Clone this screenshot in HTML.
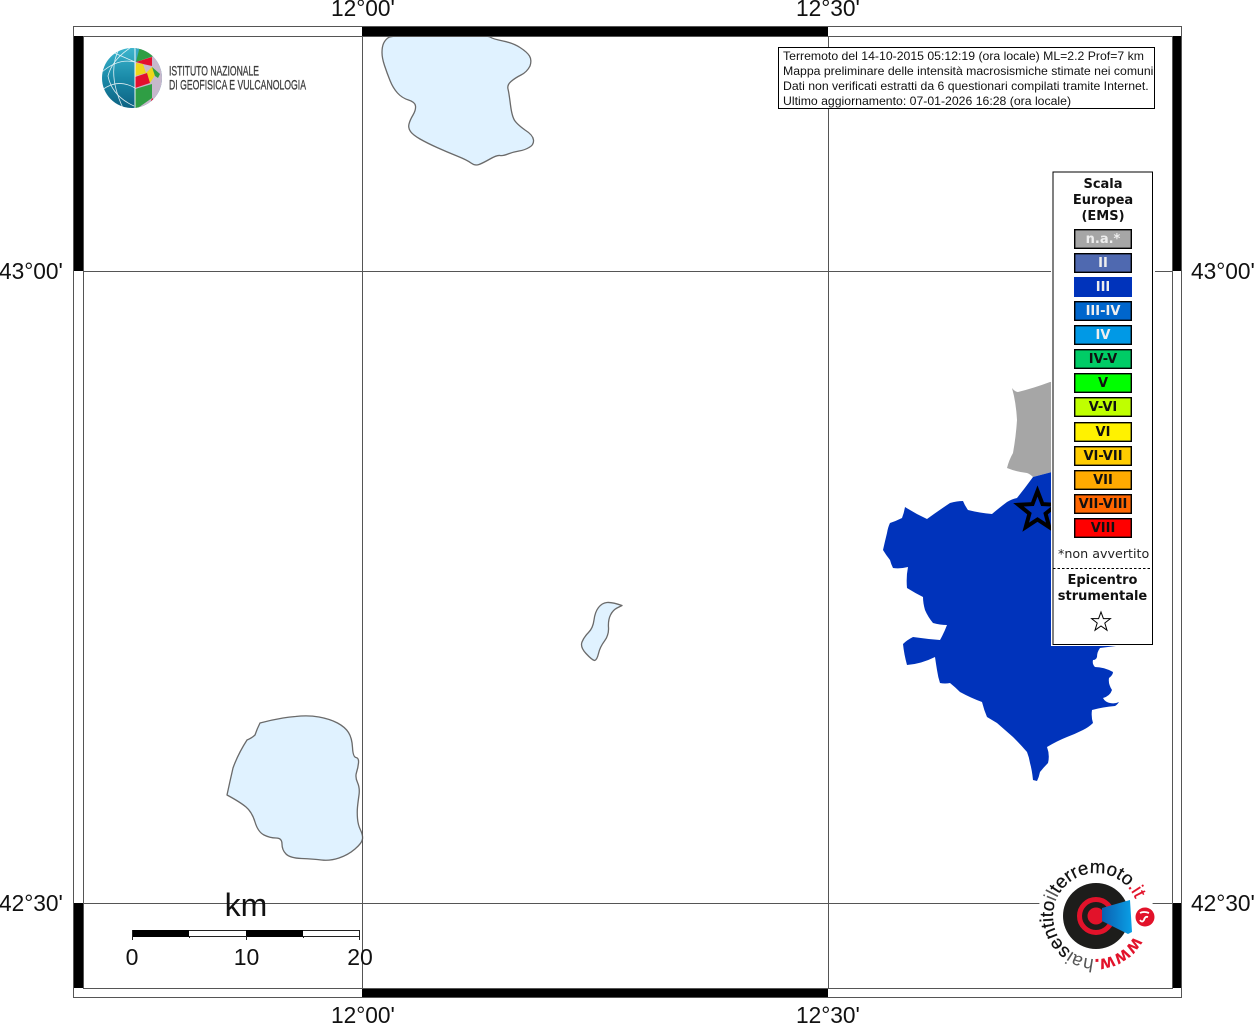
<!DOCTYPE html>
<html lang="it">
<head>
<meta charset="utf-8">
<title>Mappa intensità</title>
<style>
html,body{margin:0;padding:0;background:#fff;width:1255px;height:1024px;overflow:hidden}
svg{display:block}
.l{font-family:"Liberation Sans",sans-serif;font-size:22.7px;fill:#111}
.i{font-family:"Liberation Sans",sans-serif;font-size:12.25px;fill:#111}
.d{font-family:"DejaVu Sans",sans-serif;font-size:13px;font-weight:bold;fill:#111;text-anchor:middle}
.r{font-family:"DejaVu Sans",sans-serif;font-size:13px;font-weight:bold;text-anchor:middle}
</style>
</head>
<body>
<svg width="1255" height="1024" viewBox="0 0 1255 1024" xmlns="http://www.w3.org/2000/svg">
<rect width="1255" height="1024" fill="#fff"/>

<!-- lakes -->
<g fill="#e0f2ff" stroke="#6a6a6a" stroke-width="1.3" stroke-linejoin="round">
<path d="M382,52.5 Q382,47 383.5,43.5 Q385,40 388.5,37.5 Q392,35 439.5,35 Q487,35 490,37 Q493,39 503,41 Q513,43 520,47.5 Q527,52 529.5,56 Q532,60 530,66 Q527,72 521,75 Q515,78 511,81.5 Q507,85 508,89 Q509,93 510.5,105 Q512,117 515,121 Q518,125 525,130 Q533,135 533.5,140 Q534,145 529,147.5 Q525,150 519,151 Q513,152 508,154 Q503,156 500,155.5 Q497,155 490,159 Q483,163 479,164.5 Q475,166 471,163 Q467,160 457,156 Q447,152 437,147.5 Q427,143 420,139 Q413,135 410.5,131.5 Q408,128 409,124 Q410,120 413,115 Q416,110 415.5,106 Q415,102 408.5,100 Q402,98 397.5,93 Q393,88 390,80.5 Q387,73 384.5,65.5 Q382,58 382,52.5 Z"/>
<path d="M295.5,716.5 Q308,715 319,717 Q330,719 337.5,723 Q345,727 348.5,732.5 Q352,738 352.5,747.5 Q353,757 356,757.5 Q359,758 358.5,763 Q358,768 356.5,772.5 Q355,777 357.5,782.5 Q360,788 359,795 Q358,802 357.5,807 Q357,812 357.5,818.5 Q358,825 360.5,830 Q363,835 362.5,839 Q362,843 355,849 Q348,855 339,858 Q330,861 321.5,860 Q313,859 301.5,858.5 Q290,858 286,854 Q282,850 282,844 Q282,838 276,838 Q270,838 264,835 Q258,832 255,822 Q252,812 246,807 Q240,802 227,795 Q230,781 233,768 Q238,754 247,740 Q252,738 255,735 Q257,729 260,723 Q271,720 283,718 Q289,717 295.5,716.5 Z"/>
<path d="M598.5,607.5 Q602,603 607,602.5 Q612,602 622,605.5 L617,608 Q613,610 610.5,615 Q608,620 608.5,627.5 Q609,635 604.5,641 Q600,647 598.5,653.5 Q597,660 594.5,660.5 Q592,660 586,653.5 Q580,647 582,642 Q584,637 588.5,632.5 Q593,628 594,620 Q595,612 598.5,607.5 Z"/>
</g>

<!-- grey municipality -->
<path fill="#a6a6a6" d="M1012,388 Q1015,392 1018,392 Q1034,388 1050,382 L1075,380 L1075,474 L1052,472 L1033,477 Q1030,474 1027,473 Q1017,472 1007,468 Q1009,460 1013,453 Q1016,436 1017,420 Q1016,402 1012,388 Z"/>
<!-- blue municipality -->
<path fill="#0033bb" d="M1033,477 L1052,472 L1100,500 L1120,600 L1116,646 L1100,648 Q1097,652 1097,657 Q1096,660 1093,660 Q1092,664 1095,667 Q1104,667 1113,672 Q1113,675 1109,678 Q1108,684 1112,690 Q1110,696 1103,698 Q1105,702 1110,703 Q1115,704 1119,702 Q1117,705 1115,706 Q1103,707 1092,710 Q1091,717 1093,723 Q1089,727 1083,730 Q1075,734 1067,737 Q1057,741 1047,747 Q1050,755 1048,763 Q1044,767 1040,772 Q1039,777 1037,781 L1033,780 Q1032,770 1030,763 Q1029,757 1027,752 Q1020,744 1013,737 Q1005,730 997,723 Q992,720 987,717 Q984,710 982,702 Q971,698 960,692 Q955,687 950,683 Q945,684 940,683 Q938,677 937,670 Q936,664 935,657 Q921,664 907,665 Q904,654 903,644 Q907,640 913,637 Q927,639 940,640 Q944,633 947,625 Q940,625 933,623 Q928,617 925,610 Q923,603 923,597 Q915,593 907,588 Q906,577 908,567 Q900,569 893,568 Q891,564 890,560 Q886,555 883,550 Q885,541 887,533 Q888,527 890,523 Q896,521 902,518 Q904,513 905,507 Q916,514 927,519 Q938,511 950,503 Q957,501 963,501 Q965,506 968,510 Q980,513 992,514 Q999,508 1007,502 Q1012,499 1017,498 Q1025,488 1033,477 Z"/>
<!-- epicentre star -->
<polygon fill="#0033bb" stroke="#000" stroke-width="4" stroke-linejoin="miter" points="1037.5,491 1042.5,504.1 1056.5,504.8 1045.6,513.6 1049.3,527.2 1037.5,519.5 1025.7,527.2 1029.4,513.6 1018.5,504.8 1032.5,504.1"/>

<!-- graticule -->
<g stroke="#555" stroke-width="1" fill="none">
<line x1="362.5" y1="36" x2="362.5" y2="988"/>
<line x1="828.5" y1="36" x2="828.5" y2="988"/>
<line x1="83" y1="271.5" x2="1172" y2="271.5"/>
<line x1="83" y1="903.5" x2="1172" y2="903.5"/>
</g>

<!-- frame -->
<g fill="#000">
<rect x="362" y="26" width="466" height="10"/>
<rect x="362" y="988" width="466" height="9"/>
<rect x="73" y="36" width="10" height="235"/>
<rect x="73" y="903" width="10" height="85"/>
<rect x="1172" y="36" width="9" height="235"/>
<rect x="1172" y="903" width="9" height="85"/>
</g>
<g fill="none" stroke="#555" stroke-width="1">
<rect x="73.5" y="26.5" width="1108" height="971"/>
<rect x="83.5" y="36.5" width="1089" height="952"/>
</g>

<!-- coordinate labels -->
<text class="l" x="331" y="16">12°00'</text>
<text class="l" x="796" y="16">12°30'</text>
<text class="l" x="331" y="1023">12°00'</text>
<text class="l" x="796" y="1023">12°30'</text>
<text class="l" x="-1" y="279">43°00'</text>
<text class="l" x="1191" y="279">43°00'</text>
<text class="l" x="-1" y="911">42°30'</text>
<text class="l" x="1191" y="911">42°30'</text>

<!-- INGV logo -->
<defs>
<clipPath id="gc"><circle cx="132" cy="78" r="30"/></clipPath>
<linearGradient id="gt" x1="0" y1="0" x2="0" y2="1"><stop offset="0" stop-color="#3fb8d0"/><stop offset=".5" stop-color="#1a8aa8"/><stop offset="1" stop-color="#0c5f80"/></linearGradient>
<linearGradient id="cone" x1="0" y1="0" x2="1" y2="0"><stop offset="0" stop-color="#0b5fb0"/><stop offset="1" stop-color="#0aa0e6"/></linearGradient>
</defs>
<g clip-path="url(#gc)">
<rect x="100" y="46" width="64" height="64" fill="url(#gt)"/>
<polygon points="135,46 164,46 164,110 135,110" fill="#c7b8cc"/>
<polygon points="135,46 140,46 150,50 154,56 136,62" fill="#2f9e44"/>
<polygon points="135,46 140,46 136,62 135,62" fill="#35a8c4"/>
<polygon points="136,62 152,57 152,66 143,64" fill="#e30f2d"/>
<polygon points="136,63 143,64 146,73 135,76" fill="#ecd71a"/>
<polygon points="146,73 152,67 157,72 150,83" fill="#ecd71a"/>
<polygon points="152,67 160,74 158,78 155,76" fill="#2f9e44"/>
<polygon points="135,77 147,73 150,83 135,88" fill="#e30f2d"/>
<polygon points="135,89 152,84 152,98 135,110" fill="#2f9e44"/>
<polygon points="152,98 154,100 150,104" fill="#e30f2d"/>
<g fill="none" stroke="#fff" stroke-width=".8" opacity=".85">
<path d="M135,46 V110" stroke-width="1.1"/>
<path d="M102,72 Q118,58 135,62"/>
<path d="M102,90 Q118,78 135,88"/>
<path d="M120,47 Q106,72 123,108"/>
<path d="M130,48 Q112,60 108,76 Q112,96 134,106"/>
<path d="M112,52 L135,62"/>
</g>
</g>
<text x="169" y="75.5" font-family="'Liberation Sans',sans-serif" font-size="14" fill="#3c3c3c" stroke="#3c3c3c" stroke-width=".3" textLength="90" lengthAdjust="spacingAndGlyphs">ISTITUTO NAZIONALE</text>
<text x="169" y="89.5" font-family="'Liberation Sans',sans-serif" font-size="14" fill="#3c3c3c" stroke="#3c3c3c" stroke-width=".3" textLength="137" lengthAdjust="spacingAndGlyphs">DI GEOFISICA E VULCANOLOGIA</text>

<!-- info box -->
<rect x="778.5" y="47.5" width="376" height="61" fill="#fff" stroke="#000" stroke-width="1"/>
<text class="i" x="783" y="60">Terremoto del 14-10-2015 05:12:19 (ora locale) ML=2.2 Prof=7 km</text>
<text class="i" x="783" y="75">Mappa preliminare delle intensità macrosismiche stimate nei comuni</text>
<text class="i" x="783" y="90">Dati non verificati estratti da 6 questionari compilati tramite Internet.</text>
<text class="i" x="783" y="105">Ultimo aggiornamento: 07-01-2026 16:28 (ora locale)</text>

<!-- legend -->
<rect x="1051" y="170" width="104" height="476" fill="#fff"/>
<rect x="1053" y="172" width="99.5" height="472.5" fill="#fff" stroke="#000" stroke-width="1"/>
<text class="d" x="1103" y="188">Scala</text>
<text class="d" x="1103" y="204">Europea</text>
<text class="d" x="1103" y="220">(EMS)</text>
<g stroke="#000" stroke-width="1.4">
<rect x="1074.7" y="229.7" width="56.6" height="18.6" fill="#a6a6a6"/>
<rect x="1074.7" y="253.7" width="56.6" height="18.6" fill="#4f69b0"/>
<rect x="1074.7" y="277.7" width="56.6" height="18.6" fill="#0033bb" stroke="#0033bb"/>
<rect x="1074.7" y="301.7" width="56.6" height="18.6" fill="#0066cc"/>
<rect x="1074.7" y="325.7" width="56.6" height="18.6" fill="#0099e6"/>
<rect x="1074.7" y="349.7" width="56.6" height="18.6" fill="#00cc66"/>
<rect x="1074.7" y="373.7" width="56.6" height="18.6" fill="#00ff00"/>
<rect x="1074.7" y="397.7" width="56.6" height="18.6" fill="#bfff00"/>
<rect x="1074.7" y="422.7" width="56.6" height="18.6" fill="#fff200"/>
<rect x="1074.7" y="446.7" width="56.6" height="18.6" fill="#ffcc00"/>
<rect x="1074.7" y="470.7" width="56.6" height="18.6" fill="#ffaa00"/>
<rect x="1074.7" y="494.7" width="56.6" height="18.6" fill="#ff6600"/>
<rect x="1074.7" y="518.7" width="56.6" height="18.6" fill="#ff0000"/>
</g>
<text class="r" x="1103" y="243" fill="#eee">n.a.*</text>
<text class="r" x="1103" y="267" fill="#eee">II</text>
<text class="r" x="1103" y="291" fill="#eee">III</text>
<text class="r" x="1103" y="315" fill="#eee">III-IV</text>
<text class="r" x="1103" y="339" fill="#eee">IV</text>
<text class="r" x="1103" y="363" fill="#111">IV-V</text>
<text class="r" x="1103" y="387" fill="#111">V</text>
<text class="r" x="1103" y="411" fill="#111">V-VI</text>
<text class="r" x="1103" y="436" fill="#111">VI</text>
<text class="r" x="1103" y="460" fill="#111">VI-VII</text>
<text class="r" x="1103" y="484" fill="#111">VII</text>
<text class="r" x="1103" y="508" fill="#111">VII-VIII</text>
<text class="r" x="1103" y="532" fill="#111">VIII</text>
<text x="1058" y="558" font-family="'DejaVu Sans',sans-serif" font-size="12.7" fill="#222">*non avvertito</text>
<line x1="1053" y1="568.5" x2="1152" y2="568.5" stroke="#000" stroke-width="1" stroke-dasharray="2.5 2"/>
<text class="d" x="1102.5" y="584">Epicentro</text>
<text class="d" x="1102.5" y="600">strumentale</text>
<polygon fill="#fff" stroke="#000" stroke-width="1" points="1101,612 1103.4,618.6 1110.4,618.6 1104.8,623 1107,630.2 1101,626 1095,630.2 1097.2,623 1091.6,618.6 1098.6,618.6"/>

<!-- scale bar -->
<g>
<text x="246" y="916" text-anchor="middle" font-family="'Liberation Sans',sans-serif" font-size="32" fill="#111">km</text>
<rect x="132.5" y="930.5" width="227" height="6" fill="#fff" stroke="#222" stroke-width="1"/>
<rect x="132" y="930" width="57" height="7" fill="#000"/>
<rect x="246" y="930" width="57" height="7" fill="#000"/>
<g stroke="#222" stroke-width="1">
<line x1="132.5" y1="930" x2="132.5" y2="940"/>
<line x1="189.5" y1="936" x2="189.5" y2="938"/>
<line x1="246.5" y1="936" x2="246.5" y2="940"/>
<line x1="303.5" y1="936" x2="303.5" y2="938"/>
<line x1="359.5" y1="930" x2="359.5" y2="940"/>
</g>
<g font-family="'Liberation Sans',sans-serif" font-size="23" fill="#111" text-anchor="middle">
<text x="132" y="965">0</text>
<text x="246.5" y="965">10</text>
<text x="360" y="965">20</text>
</g>
</g>

<!-- haisentitoilterremoto logo -->
<circle cx="1096" cy="916" r="58" fill="#fff"/>
<circle cx="1096" cy="916" r="33" fill="#1d1d1b"/>
<circle cx="1096" cy="916" r="16.5" fill="none" stroke="#e2122a" stroke-width="5"/>
<circle cx="1096" cy="916" r="8.5" fill="#e2122a"/>
<polygon points="1102,908 1130,900 1132,932 1128,934 1102,921" fill="url(#cone)"/>
<circle cx="1145" cy="917" r="9.5" fill="#e2122a"/>
<path d="M1140,920 q2,3 4,0 q1,-4 4,-3 M1140,913 q4,-2 9,0" fill="none" stroke="#fff" stroke-width="1.8"/>
<path id="arc" d="M1134,936.2 A43,43 0 1 1 1137.5,904.9" fill="none"/>
<text font-family="'Liberation Sans',sans-serif" font-size="18.7" fill="#111" stroke="#111" stroke-width=".25">
<textPath href="#arc" startOffset="0"><tspan fill="#e2122a" stroke="#e2122a" font-weight="bold">www.</tspan><tspan fill="#555" stroke="none">hai</tspan><tspan>sentito</tspan><tspan stroke="none" fill="#555">il</tspan><tspan>terremoto</tspan><tspan fill="#e2122a" stroke="#e2122a">.it</tspan></textPath>
</text>
</svg>
</body>
</html>
